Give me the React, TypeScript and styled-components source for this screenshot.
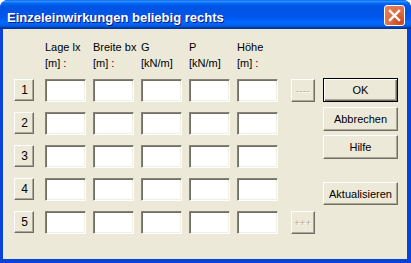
import React from "react";
import styled, { createGlobalStyle } from "styled-components";

const Global = createGlobalStyle`
  html, body { margin: 0; padding: 0; background: #ffffff; }
  #root { width: 411px; height: 263px; }
`;

const Window = styled.div`
  width: 411px;
  height: 263px;
  display: flex;
  flex-direction: column;
  box-sizing: border-box;
  background: #0842d8;
  border-radius: 8px 8px 0 0;
  overflow: hidden;
  font-family: "Liberation Sans", Arial, sans-serif;
`;

const TitleBar = styled.div`
  height: 29px;
  flex: none;
  display: flex;
  align-items: center;
  justify-content: space-between;
  padding: 0 6px 0 7px;
  box-sizing: border-box;
  background: linear-gradient(
    to bottom,
    #0058ee 0%,
    #3593ff 4%,
    #288eff 6%,
    #127dff 8%,
    #036ffc 10%,
    #0262ee 14%,
    #0057e5 20%,
    #0054e3 24%,
    #0055eb 56%,
    #005bf5 66%,
    #026afe 76%,
    #0062ef 86%,
    #0052d6 92%,
    #0040ab 94%,
    #003092 100%
  );
`;

const TitleText = styled.span`
  padding-top: 5px;
  color: #ffffff;
  font-family: "Liberation Sans", Arial, sans-serif;
  font-weight: bold;
  font-size: 13px;
  line-height: 15px;
  text-shadow: 1px 1px 0 #0a1883;
  white-space: nowrap;
`;

const CloseButton = styled.div`
  width: 21px;
  height: 21px;
  box-sizing: border-box;
  border: 1px solid #ffffff;
  border-radius: 3px;
  background: radial-gradient(circle at 80% 85%, #cc4614 0%, #dc6b45 45%, #e9835e 100%);
  display: flex;
  align-items: center;
  justify-content: center;
  margin-top: 1px;
`;

const Body = styled.div`
  flex: 1;
  margin: 0 4px 4px 3px;
  background: #ece9d8;
  display: flex;
  align-items: flex-start;
  padding: 10px 8px 0 11px;
  box-sizing: border-box;
`;

const Grid = styled.div`
  display: grid;
  grid-template-columns: 24px repeat(5, 41px) 30px;
  grid-template-rows: 30px repeat(5, 23px);
  column-gap: 7px;
  row-gap: 10px;
`;

const Header = styled.div<{ $col: number }>`
  grid-column: ${(p) => p.$col};
  grid-row: 1;
  display: flex;
  flex-direction: column;
  font-size: 11px;
  line-height: 16px;
  color: #000000;
  white-space: nowrap;
`;

const RaisedButton = styled.div`
  box-sizing: border-box;
  background: #ece9d8;
  border: 1px solid;
  border-color: #ffffff #716f64 #716f64 #ffffff;
  box-shadow: inset -1px -1px 0 #aca899;
  display: flex;
  align-items: center;
  justify-content: center;
  font-size: 11px;
  color: #000000;
`;

const RowButton = styled(RaisedButton)<{ $row: number }>`
  grid-column: 1;
  grid-row: ${(p) => p.$row};
  width: 20px;
  height: 22px;
  align-self: start;
  font-size: 12px;
  padding-left: 1px;
`;

const ExtraButton = styled(RaisedButton)<{ $row: number }>`
  grid-column: 7;
  grid-row: ${(p) => p.$row};
  justify-self: end;
  align-self: center;
  width: 24px;
  height: 23px;
  color: #aca899;
  text-shadow: 1px 1px 0 #ffffff;
  font-size: 9px;
  letter-spacing: 0.5px;
`;

const Field = styled.input<{ $row: number; $col: number }>`
  grid-column: ${(p) => p.$col};
  grid-row: ${(p) => p.$row};
  width: 41px;
  height: 23px;
  box-sizing: border-box;
  margin: 0;
  padding: 0 3px;
  background: #ffffff;
  border: 1px solid;
  border-color: #858277 #ffffff #ffffff #858277;
  box-shadow: inset 1px 1px 0 #716f64, inset -1px -1px 0 #f1efe2;
  outline: none;
  font-family: "Liberation Sans", Arial, sans-serif;
  font-size: 11px;
`;

const Side = styled.div`
  display: flex;
  flex-direction: column;
  margin-left: 8px;
  padding-top: 39px;
`;

const ActionButton = styled(RaisedButton)<{ $gap: number; $default?: boolean; $h?: number }>`
  width: 75px;
  height: ${(p) => p.$h ?? 24}px;
  margin-top: ${(p) => p.$gap}px;
  font-size: 11px;
  ${(p) =>
    p.$default
      ? `
    border-color: #000000;
    box-shadow: inset 1px 1px 0 #ffffff, inset -1px -1px 0 #716f64, inset -2px -2px 0 #aca899;
  `
      : ""}
`;

const headers = [
  ["Lage lx", "[m] :"],
  ["Breite bx", "[m] :"],
  ["G", "[kN/m]"],
  ["P", "[kN/m]"],
  ["Höhe", "[m] :"],
];

export default function App() {
  return (
    <>
      <Global />
      <Window>
        <TitleBar>
          <TitleText>Einzeleinwirkungen beliebig rechts</TitleText>
          <CloseButton>
            <svg width="13" height="13" viewBox="0 0 13 13">
              <path d="M2 2 L11 11 M11 2 L2 11" stroke="#ffffff" strokeWidth="2.4" strokeLinecap="square" />
            </svg>
          </CloseButton>
        </TitleBar>
        <Body>
          <Grid>
            {headers.map((h, i) => (
              <Header key={i} $col={i + 2}>
                <span>{h[0]}</span>
                <span>{h[1]}</span>
              </Header>
            ))}
            {[1, 2, 3, 4, 5].map((n) => (
              <React.Fragment key={n}>
                <RowButton $row={n + 1}>{n}</RowButton>
                {[0, 1, 2, 3, 4].map((c) => (
                  <Field key={c} $row={n + 1} $col={c + 2} defaultValue="" />
                ))}
              </React.Fragment>
            ))}
            <ExtraButton $row={2}>----</ExtraButton>
            <ExtraButton $row={6}>+++</ExtraButton>
          </Grid>
          <Side>
            <ActionButton $gap={0} $default>OK</ActionButton>
            <ActionButton $gap={5}>Abbrechen</ActionButton>
            <ActionButton $gap={4}>Hilfe</ActionButton>
            <ActionButton $gap={23} $h={23}>Aktualisieren</ActionButton>
          </Side>
        </Body>
      </Window>
    </>
  );
}
